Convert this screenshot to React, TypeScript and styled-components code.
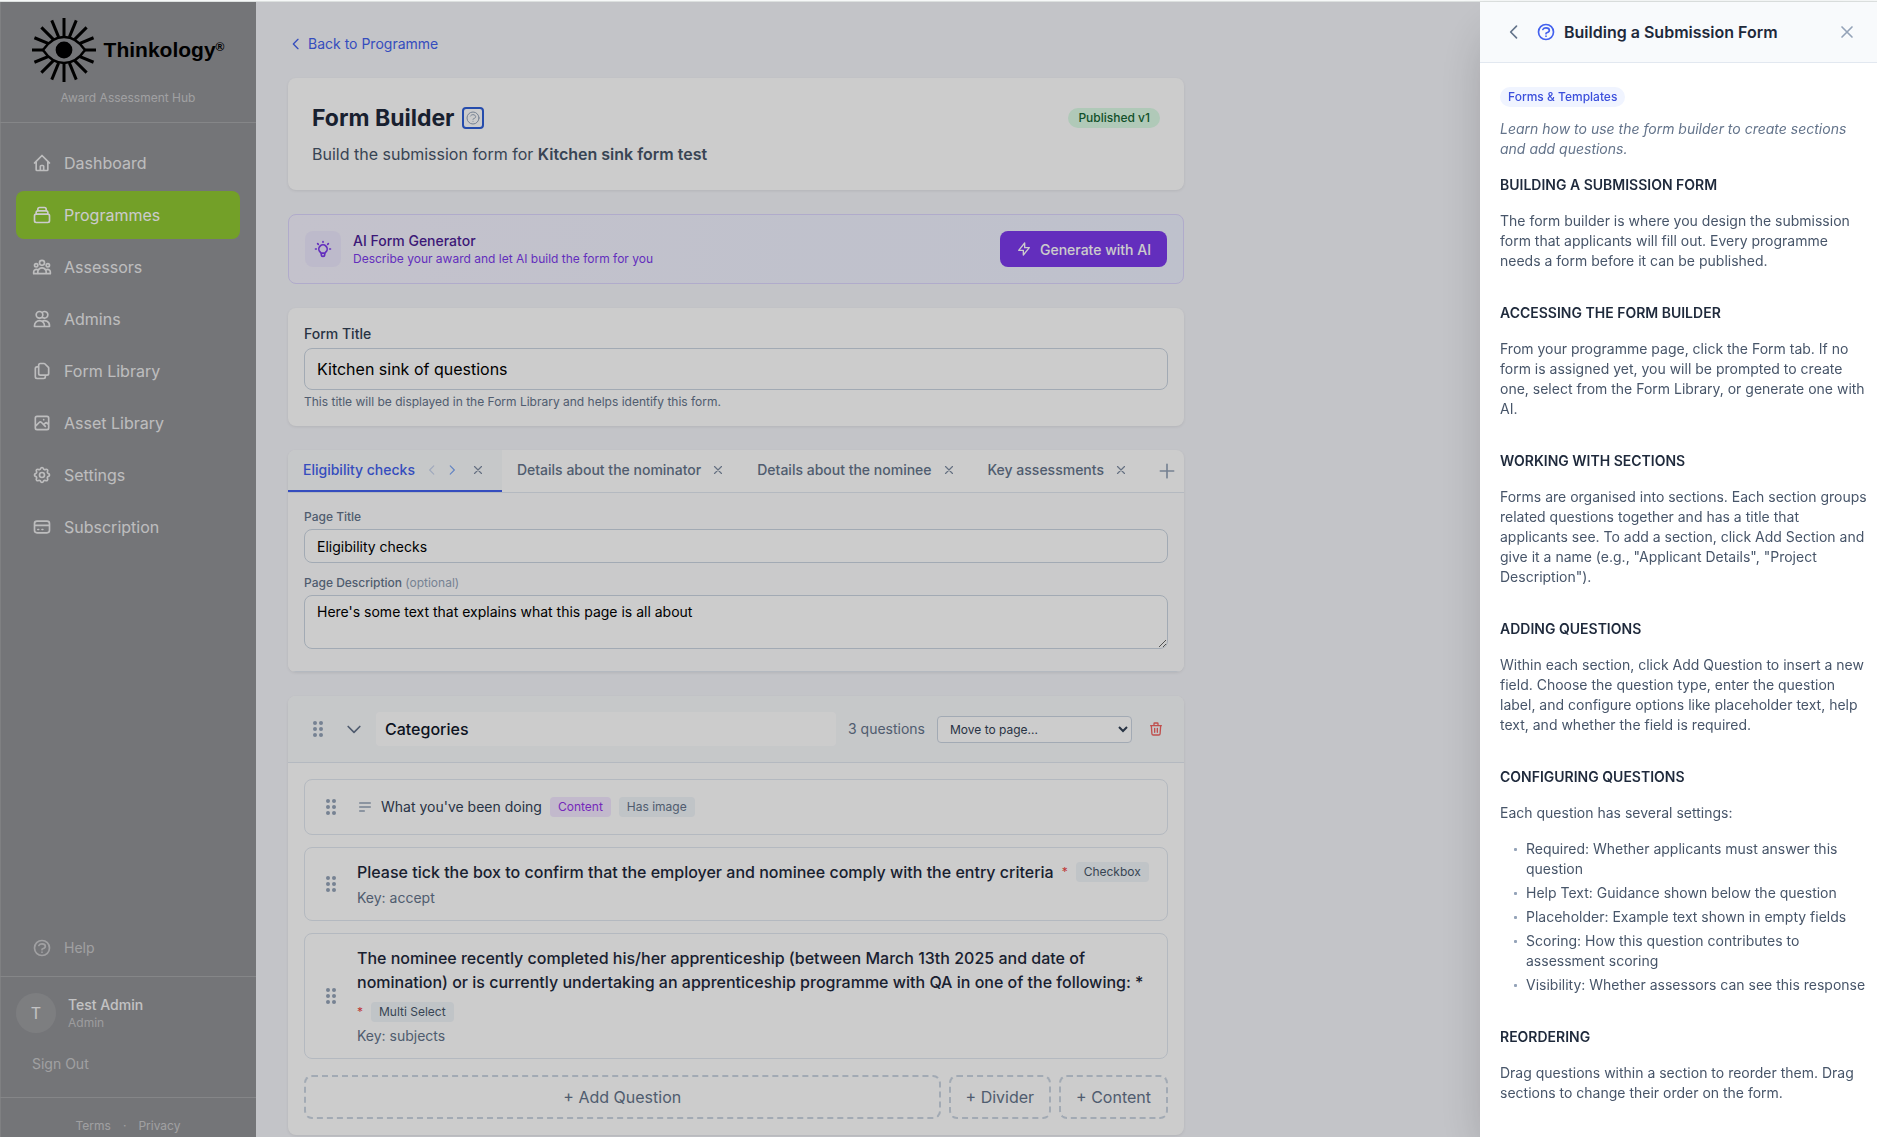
import React from "react";
import styled, { createGlobalStyle, css } from "styled-components";

const GlobalStyle = createGlobalStyle`
  *, *::before, *::after { box-sizing: border-box; }
  body {
    margin: 0;
    font-family: Inter, "Liberation Sans", sans-serif;
    font-size: 16px;
    line-height: 24px;
    color: #0f172a;
    -webkit-font-smoothing: antialiased;
  }
  h1, h2, h3, p, ul { margin: 0; padding: 0; }
  button, input, select, textarea { font-family: inherit; margin: 0; }
  button { background: none; border: 0; padding: 0; cursor: pointer; color: inherit; }
  a { text-decoration: none; color: inherit; }
`;

const paths = {
  home: "M3 12l2-2m0 0l7-7 7 7M5 10v10a1 1 0 001 1h3m10-11l2 2m-2-2v10a1 1 0 01-1 1h-3m-6 0a1 1 0 001-1v-4a1 1 0 011-1h2a1 1 0 011 1v4a1 1 0 001 1m-6 0h6",
  collection:
    "M19 11H5m14 0a2 2 0 012 2v6a2 2 0 01-2 2H5a2 2 0 01-2-2v-6a2 2 0 012-2m14 0V9a2 2 0 00-2-2M5 11V9a2 2 0 012-2m0 0V5a2 2 0 012-2h6a2 2 0 012 2v2M7 7h10",
  group:
    "M17 20h5v-2a3 3 0 00-5.356-1.857M17 20H7m10 0v-2c0-.656-.126-1.283-.356-1.857M7 20H2v-2a3 3 0 015.356-1.857M7 20v-2c0-.656.126-1.283.356-1.857m0 0a5.002 5.002 0 019.288 0M15 7a3 3 0 11-6 0 3 3 0 016 0zm6 3a2 2 0 11-4 0 2 2 0 014 0zM7 10a2 2 0 11-4 0 2 2 0 014 0z",
  users:
    "M12 4.354a4 4 0 110 5.292M15 21H3v-1a6 6 0 0112 0v1zm0 0h6v-1a6 6 0 00-9-5.197M13 7a4 4 0 11-8 0 4 4 0 018 0z",
  documents:
    "M8 7v8a2 2 0 002 2h6M8 7V5a2 2 0 012-2h4.586a1 1 0 01.707.293l4.414 4.414a1 1 0 01.293.707V15a2 2 0 01-2 2h-2M8 7H6a2 2 0 00-2 2v10a2 2 0 002 2h8a2 2 0 002-2v-2",
  photo:
    "M4 16l4.586-4.586a2 2 0 012.828 0L16 16m-2-2l1.586-1.586a2 2 0 012.828 0L20 14m-6-6h.01M6 20h12a2 2 0 002-2V6a2 2 0 00-2-2H6a2 2 0 00-2 2v12a2 2 0 002 2z",
  cog: "M10.325 4.317c.426-1.756 2.924-1.756 3.35 0a1.724 1.724 0 002.573 1.066c1.543-.94 3.31.826 2.37 2.37a1.724 1.724 0 001.065 2.572c1.756.426 1.756 2.924 0 3.35a1.724 1.724 0 00-1.066 2.573c.94 1.543-.826 3.31-2.37 2.37a1.724 1.724 0 00-2.572 1.065c-.426 1.756-2.924 1.756-3.35 0a1.724 1.724 0 00-2.573-1.066c-1.543.94-3.31-.826-2.37-2.37a1.724 1.724 0 00-1.065-2.572c-1.756-.426-1.756-2.924 0-3.35a1.724 1.724 0 001.066-2.573c-.94-1.543.826-3.31 2.37-2.37.996.608 2.296.07 2.572-1.065z M15 12a3 3 0 11-6 0 3 3 0 016 0z",
  card: "M3 10h18M7 15h1m4 0h1m-7 4h12a3 3 0 003-3V8a3 3 0 00-3-3H6a3 3 0 00-3 3v8a3 3 0 003 3z",
  help: "M8.228 9c.549-1.165 2.03-2 3.772-2 2.21 0 4 1.343 4 3 0 1.4-1.278 2.575-3.006 2.907-.542.104-.994.54-.994 1.093m0 3h.01M21 12a9 9 0 11-18 0 9 9 0 0118 0z",
  bulb: "M9.663 17h4.673M12 3v1m6.364 1.636l-.707.707M21 12h-1M4 12H3m3.343-5.657l-.707-.707m2.828 9.9a5 5 0 117.072 0l-.548.547A3.374 3.374 0 0014 18.469V19a2 2 0 11-4 0v-.531c0-.895-.356-1.754-.988-2.386l-.548-.547z",
  bolt: "M13 10V3L4 14h7v7l9-11h-7z",
  trash:
    "M19 7l-.867 12.142A2 2 0 0116.138 21H7.862a2 2 0 01-1.995-1.858L5 7m5 4v6m4-6v6m1-10V4a1 1 0 00-1-1h-4a1 1 0 00-1 1v3M4 7h16",
  left: "M15 19l-7-7 7-7",
  right: "M9 5l7 7-7 7",
  down: "M19 9l-7 7-7-7",
  close: "M6 18L18 6M6 6l12 12",
  plus: "M12 4v16m8-8H4",
  lines: "M4 6h16M4 12h16M4 18h7",
};

type IconName = keyof typeof paths;

const Svg = styled.svg`
  display: block;
  flex: none;
`;

function Icon({ name, size = 20, stroke = 2 }: { name: IconName; size?: number; stroke?: number }) {
  return (
    <Svg
      width={size}
      height={size}
      viewBox="0 0 24 24"
      fill="none"
      stroke="currentColor"
      strokeWidth={stroke}
      strokeLinecap="round"
      strokeLinejoin="round"
      aria-hidden="true"
    >
      <path d={paths[name]} />
    </Svg>
  );
}

function Dots() {
  return (
    <Svg width="20" height="20" viewBox="0 0 20 20" fill="currentColor" aria-hidden="true">
      {[4, 10, 16].map((y) => (
        <React.Fragment key={y}>
          <circle cx="7" cy={y} r="2" />
          <circle cx="13" cy={y} r="2" />
        </React.Fragment>
      ))}
    </Svg>
  );
}

/* ---------- Shell ---------- */

const Shell = styled.div`
  height: 100vh;
  display: flex;
  flex-direction: column;
  overflow: hidden;
`;

const TopStrip = styled.div`
  flex: none;
  height: 2px;
  background: #f6f8f8;
  border-bottom: 1px solid #dce0df;
`;

const Body = styled.div`
  flex: 1;
  min-height: 0;
  display: flex;
`;

const Backdrop = styled.div`
  position: fixed;
  inset: 2px 0 0;
  background: rgba(0, 0, 0, 0.2);
`;

/* ---------- Sidebar ---------- */

const Sidebar = styled.aside`
  flex: none;
  width: 256px;
  display: flex;
  flex-direction: column;
  background: #929397;
  box-shadow: inset 1px 0 #9fa0a3;
  color: #f4f4f5;
`;

const Brand = styled.div`
  height: 121px;
  padding-top: 16px;
  display: flex;
  flex-direction: column;
  align-items: center;
  gap: 8px;
  border-bottom: 1px solid #a7a8ab;
`;

const Logo = styled.div`
  display: flex;
  align-items: center;
  gap: 8px;
  color: #000;
`;

const Wordmark = styled.span`
  font-family: "Liberation Sans", Arial, sans-serif;
  font-weight: 700;
  font-size: 21px;
  line-height: 24px;
  sup {
    font-size: 12px;
    line-height: 12px;
    vertical-align: 6px;
  }
`;

const Tagline = styled.span`
  font-size: 12px;
  line-height: 16px;
  color: #c9c9cb;
`;

const Nav = styled.nav`
  flex: 1;
  padding: 16px;
  display: flex;
  flex-direction: column;
  gap: 4px;
`;

const NavLink = styled.a<{ $active?: boolean }>`
  height: 48px;
  padding: 0 16px;
  display: flex;
  align-items: center;
  gap: 12px;
  border-radius: 8px;
  color: #ededee;
  ${(p) =>
    p.$active &&
    css`
      background: #90c832;
      color: #fff;
    `}
`;

const HelpLink = styled.a`
  height: 40px;
  margin: 0 16px 8px;
  padding: 0 16px;
  display: flex;
  align-items: center;
  gap: 12px;
  font-size: 14px;
  color: #c9c9cb;
`;

const Account = styled.div`
  padding: 16px;
  border-top: 1px solid #a7a8ab;
`;

const Person = styled.div`
  display: flex;
  align-items: center;
  gap: 12px;
  margin-bottom: 12px;
`;

const Avatar = styled.div`
  width: 40px;
  height: 40px;
  border-radius: 50%;
  display: grid;
  place-items: center;
  background: #9d9ea1;
`;

const PersonName = styled.div`
  font-size: 14px;
  font-weight: 500;
  line-height: 20px;
`;

const PersonRole = styled.div`
  font-size: 12px;
  line-height: 16px;
  color: #c4c4c6;
`;

const SignOut = styled.button`
  width: 100%;
  height: 36px;
  padding: 0 16px;
  text-align: left;
  font-size: 14px;
  color: #c9c9cb;
`;

const Legal = styled.div`
  padding: 20px 0 3px;
  display: flex;
  justify-content: center;
  gap: 12px;
  border-top: 1px solid #a7a8ab;
  font-size: 12px;
  line-height: 16px;
  color: #c9c9cb;
`;

/* ---------- Main column ---------- */

const Main = styled.main`
  flex: 1;
  min-width: 0;
  padding: 32px;
  overflow: hidden;
  background: #f4f5fa;
`;

const Column = styled.div`
  max-width: 896px;
  display: flex;
  flex-direction: column;
  gap: 24px;
`;

const BackLink = styled.a`
  align-self: flex-start;
  display: flex;
  align-items: center;
  gap: 4px;
  font-size: 14px;
  line-height: 20px;
  color: #4361ee;
`;

const Card = styled.section`
  background: #fff;
  border-radius: 8px;
  box-shadow: 0 1px 3px rgba(0, 0, 0, 0.08);
  overflow: hidden;
`;

const HeaderCard = styled(Card)`
  padding: 24px;
  display: flex;
  justify-content: space-between;
  align-items: flex-start;
`;

const TitleRow = styled.div`
  display: flex;
  align-items: center;
  gap: 10px;
  margin-bottom: 8px;
`;

const Title = styled.h1`
  font-size: 23px;
  line-height: 32px;
  font-weight: 700;
  color: #1e293b;
`;

const HintButton = styled.button`
  padding: 1px;
  border-radius: 2px;
  outline: 2px solid #2f5fd8;
  color: #94a3b8;
`;

const Subtitle = styled.p`
  color: #475569;
  strong {
    font-weight: 600;
  }
`;

const Published = styled.span`
  margin-top: 6px;
  padding: 2px 10px;
  border-radius: 10px;
  font-size: 12px;
  line-height: 16px;
  font-weight: 500;
  background: #dcfce7;
  color: #166534;
`;

const AiCard = styled.section`
  padding: 16px;
  display: flex;
  align-items: center;
  gap: 12px;
  border: 1px solid #ddd6fe;
  border-radius: 8px;
  background: linear-gradient(90deg, #f5f3ff, #eef2ff);
`;

const AiBadge = styled.div`
  padding: 8px;
  border-radius: 8px;
  background: #ede9fe;
  color: #7c3aed;
`;

const AiText = styled.div`
  flex: 1;
`;

const AiTitle = styled.h3`
  font-size: 14px;
  line-height: 20px;
  font-weight: 500;
  color: #4c1d95;
`;

const AiNote = styled.p`
  font-size: 12px;
  line-height: 16px;
  color: #7c3aed;
`;

const AiButton = styled.button`
  height: 36px;
  padding: 0 16px;
  display: flex;
  align-items: center;
  gap: 8px;
  border-radius: 8px;
  background: #7c3aed;
  color: #fff;
  font-size: 14px;
  font-weight: 500;
`;

const PaddedCard = styled(Card)`
  padding: 16px;
`;

const Label = styled.label<{ $small?: boolean }>`
  display: block;
  margin-bottom: 4px;
  font-weight: 500;
  font-size: ${(p) => (p.$small ? 12 : 14)}px;
  line-height: ${(p) => (p.$small ? 16 : 20)}px;
  color: ${(p) => (p.$small ? "#64748b" : "#334155")};
  span {
    font-weight: 400;
    color: #94a3b8;
  }
`;

const field = css`
  display: block;
  width: 100%;
  border: 1px solid #cbd5e1;
  border-radius: 8px;
  background: #fff;
  color: #000;
`;

const TextInput = styled.input<{ $small?: boolean }>`
  ${field}
  height: ${(p) => (p.$small ? 34 : 42)}px;
  padding: 0 12px;
  font-size: ${(p) => (p.$small ? 14 : 16)}px;
`;

const TextArea = styled.textarea`
  ${field}
  height: 54px;
  padding: 6px 12px;
  font-size: 14px;
  line-height: 20px;
`;

const HelpText = styled.p`
  margin-top: 4px;
  font-size: 12px;
  line-height: 16px;
  color: #64748b;
`;

const TabBar = styled.div`
  display: flex;
  border-bottom: 1px solid #e2e8f0;
`;

const Tab = styled.div<{ $active?: boolean }>`
  flex: none;
  height: 42px;
  padding: 0 15px;
  display: flex;
  align-items: center;
  gap: 8px;
  border-bottom: 2px solid transparent;
  color: #64748b;
  ${(p) =>
    p.$active &&
    css`
      border-color: #4361ee;
      background: #f8fafc;
      color: #4361ee;
    `}
`;

const TabName = styled.button`
  font-size: 14px;
  line-height: 20px;
  font-weight: 500;
`;

const Movers = styled.span`
  display: flex;
  gap: 2px;
`;

const TinyButton = styled.button<{ $tone?: "blue" | "faint" }>`
  padding: 2px;
  color: ${(p) => (p.$tone === "blue" ? "#7aa5f5" : p.$tone === "faint" ? "#c7d3ec" : "#7f8da3")};
`;

const AddTab = styled.button`
  flex: none;
  padding: 0 12px;
  color: #94a3b8;
`;

const TabPanel = styled.div`
  padding: 16px 16px 22px;
  display: flex;
  flex-direction: column;
  gap: 12px;
  background: #fdfdfe;
  border-bottom: 1px solid #e2e8f0;
`;

const SectionHead = styled.div`
  padding: 16px;
  display: flex;
  align-items: center;
  gap: 12px;
  background: #f8fafc;
  border-bottom: 1px solid #e2e8f0;
`;

const Handle = styled.button`
  flex: none;
  padding: 4px;
  color: #94a3b8;
`;

const Toggle = styled.button`
  flex: none;
  color: #64748b;
`;

const SectionName = styled.input`
  flex: 1;
  min-width: 0;
  height: 34px;
  padding: 0 9px;
  border: 0;
  border-radius: 4px;
  background: #fff;
  font-size: 16px;
  font-weight: 500;
  color: #0f172a;
`;

const Count = styled.span`
  font-size: 14px;
  line-height: 20px;
  color: #64748b;
`;

const MoveSelect = styled.select`
  width: 195px;
  height: 27px;
  padding: 0 8px;
  border: 1px solid #cbd5e1;
  border-radius: 4px;
  background: #fff;
  font-size: 12px;
  color: #334155;
`;

const Delete = styled.button`
  flex: none;
  padding: 4px;
  color: #f0625f;
`;

const SectionBody = styled.div`
  padding: 16px;
  display: flex;
  flex-direction: column;
  gap: 12px;
`;

const Question = styled.article`
  min-height: 56px;
  padding: 12px;
  display: flex;
  align-items: center;
  gap: 12px;
  border: 1px solid #e2e8f0;
  border-radius: 8px;
`;

const QuestionLine = styled.div`
  display: flex;
  flex-wrap: wrap;
  align-items: center;
  gap: 8px;
`;

const QuestionTitle = styled.h3`
  font-size: 16px;
  line-height: 24px;
  font-weight: 500;
  color: #1e293b;
`;

const ContentTitle = styled.h3`
  font-size: 14px;
  line-height: 20px;
  font-weight: 400;
  color: #334155;
`;

const Star = styled.span`
  font-size: 12px;
  line-height: 16px;
  color: #ef4444;
`;

const Key = styled.p`
  margin-top: 4px;
  font-size: 14px;
  line-height: 20px;
  color: #64748b;
`;

const chipTones = {
  slate: css`
    background: #f1f5f9;
    color: #475569;
  `,
  muted: css`
    background: #f1f5f9;
    color: #64748b;
  `,
  purple: css`
    background: #f3e8ff;
    color: #9333ea;
  `,
};

const Chip = styled.span<{ $tone: keyof typeof chipTones }>`
  padding: 2px 8px;
  border-radius: 4px;
  font-size: 12px;
  line-height: 16px;
  ${(p) => chipTones[p.$tone]}
`;

const Muted = styled.span`
  color: #94a3b8;
`;

const AddRow = styled.div`
  margin-top: 4px;
  display: flex;
  gap: 8px;
`;

const AddButton = styled.button<{ $grow?: boolean }>`
  flex: ${(p) => (p.$grow ? "1" : "none")};
  height: 44px;
  padding: 0 15px;
  border: 2px dashed #cbd5e1;
  border-radius: 8px;
  font-size: 16px;
  color: #64748b;
`;

/* ---------- Help drawer ---------- */

const Drawer = styled.aside`
  position: fixed;
  top: 2px;
  right: 0;
  bottom: 0;
  width: 397px;
  overflow: hidden;
  background: #fff;
  box-shadow: 0 25px 50px -12px rgba(0, 0, 0, 0.25);
`;

const DrawerHead = styled.header`
  height: 61px;
  padding: 0 20px;
  display: flex;
  align-items: center;
  background: #f8fafc;
  border-bottom: 1px solid #e2e8f0;
  color: #4361ee;
`;

const DrawerTitle = styled.h2`
  flex: 1;
  margin-left: 8px;
  font-size: 16px;
  line-height: 24px;
  font-weight: 600;
  color: #1e293b;
`;

const DrawerButton = styled.button<{ $back?: boolean }>`
  padding: ${(p) => (p.$back ? "4px" : "0")};
  margin-right: ${(p) => (p.$back ? "8px" : "0")};
  color: ${(p) => (p.$back ? "#64748b" : "#94a3b8")};
`;

const DrawerBody = styled.div`
  padding: 24px 8px 24px 20px;
  font-size: 14px;
  line-height: 20px;
  color: #475569;
`;

const Topic = styled.span`
  display: inline-block;
  padding: 2px 8px;
  border-radius: 10px;
  font-size: 12px;
  line-height: 16px;
  font-weight: 500;
  vertical-align: top;
  background: #f0f4ff;
  color: #3b4fdc;
`;

const Intro = styled.p`
  margin-top: 12px;
  margin-bottom: 16px;
  font-style: italic;
  color: #64748b;
`;

const Article = styled.section`
  display: flex;
  flex-direction: column;
  gap: 16px;
  margin-bottom: 32px;
`;

const ArticleTitle = styled.h3`
  font-size: 14px;
  line-height: 20px;
  font-weight: 600;
  text-transform: uppercase;
  color: #1e293b;
`;

const List = styled.ul`
  display: flex;
  flex-direction: column;
  gap: 4px;
  list-style: none;
`;

const ListItem = styled.li`
  display: flex;
  padding-left: 14px;
  &::before {
    content: "";
    flex: none;
    width: 3px;
    height: 3px;
    margin: 9px 9px 0 0;
    border-radius: 1px;
    background: #94a3b8;
  }
`;

const nav: { name: string; icon: IconName }[] = [
  { name: "Dashboard", icon: "home" },
  { name: "Programmes", icon: "collection" },
  { name: "Assessors", icon: "group" },
  { name: "Admins", icon: "users" },
  { name: "Form Library", icon: "documents" },
  { name: "Asset Library", icon: "photo" },
  { name: "Settings", icon: "cog" },
  { name: "Subscription", icon: "card" },
];

const articles: { title: string; text: string; items?: string[] }[] = [
  {
    title: "Building a Submission Form",
    text: "The form builder is where you design the submission form that applicants will fill out. Every programme needs a form before it can be published.",
  },
  {
    title: "Accessing the Form Builder",
    text: "From your programme page, click the Form tab. If no form is assigned yet, you will be prompted to create one, select from the Form Library, or generate one with AI.",
  },
  {
    title: "Working with Sections",
    text: 'Forms are organised into sections. Each section groups related questions together and has a title that applicants see. To add a section, click Add Section and give it a name (e.g., "Applicant Details", "Project Description").',
  },
  {
    title: "Adding Questions",
    text: "Within each section, click Add Question to insert a new field. Choose the question type, enter the question label, and configure options like placeholder text, help text, and whether the field is required.",
  },
  {
    title: "Configuring Questions",
    text: "Each question has several settings:",
    items: [
      "Required: Whether applicants must answer this question",
      "Help Text: Guidance shown below the question",
      "Placeholder: Example text shown in empty fields",
      "Scoring: How this question contributes to assessment scoring",
      "Visibility: Whether assessors can see this response",
    ],
  },
  {
    title: "Reordering",
    text: "Drag questions within a section to reorder them. Drag sections to change their order on the form.",
  },
];

function EyeLogo() {
  const rays = Array.from({ length: 16 }, (_, i) => (i * Math.PI) / 8);
  return (
    <Svg width="64" height="64" viewBox="-32 -32 64 64" aria-hidden="true">
      {rays.map((a) => (
        <line
          key={a}
          x1={Math.cos(a) * 14}
          y1={Math.sin(a) * 14}
          x2={Math.cos(a) * 32}
          y2={Math.sin(a) * 32}
          stroke="#000"
          strokeWidth="3"
        />
      ))}
      <path
        d="M-21 0C-15 -9 -8 -13 0 -13S15 -9 21 0C15 9 8 13 0 13S-15 9 -21 0Z"
        fill="#929397"
        stroke="#000"
        strokeWidth="2.4"
      />
      <circle r="8.4" />
    </Svg>
  );
}

export default function App() {
  return (
    <Shell>
      <GlobalStyle />
      <TopStrip />
      <Body>
        <Sidebar>
          <Brand>
            <Logo>
              <EyeLogo />
              <Wordmark>
                Thinkology<sup>®</sup>
              </Wordmark>
            </Logo>
            <Tagline>Award Assessment Hub</Tagline>
          </Brand>
          <Nav>
            {nav.map((n) => (
              <NavLink key={n.name} href="#" $active={n.name === "Programmes"}>
                <Icon name={n.icon} />
                {n.name}
              </NavLink>
            ))}
          </Nav>
          <HelpLink href="#">
            <Icon name="help" />
            Help
          </HelpLink>
          <Account>
            <Person>
              <Avatar>T</Avatar>
              <div>
                <PersonName>Test Admin</PersonName>
                <PersonRole>Admin</PersonRole>
              </div>
            </Person>
            <SignOut>Sign Out</SignOut>
          </Account>
          <Legal>
            <a href="#">Terms</a>
            <span>·</span>
            <a href="#">Privacy</a>
          </Legal>
        </Sidebar>

        <Main>
          <Column>
            <BackLink href="#">
              <Icon name="left" size={16} />
              Back to Programme
            </BackLink>

            <HeaderCard>
              <div>
                <TitleRow>
                  <Title>Form Builder</Title>
                  <HintButton aria-label="Help with the form builder">
                    <Icon name="help" size={16} stroke={1.5} />
                  </HintButton>
                </TitleRow>
                <Subtitle>
                  Build the submission form for <strong>Kitchen sink form test</strong>
                </Subtitle>
              </div>
              <Published>Published v1</Published>
            </HeaderCard>

            <AiCard>
              <AiBadge>
                <Icon name="bulb" />
              </AiBadge>
              <AiText>
                <AiTitle>AI Form Generator</AiTitle>
                <AiNote>Describe your award and let AI build the form for you</AiNote>
              </AiText>
              <AiButton>
                <Icon name="bolt" size={16} />
                Generate with AI
              </AiButton>
            </AiCard>

            <PaddedCard>
              <Label htmlFor="form-title">Form Title</Label>
              <TextInput id="form-title" defaultValue="Kitchen sink of questions" />
              <HelpText>This title will be displayed in the Form Library and helps identify this form.</HelpText>
            </PaddedCard>

            <Card>
              <TabBar>
                <Tab $active>
                  <TabName>Eligibility checks</TabName>
                  <Movers>
                    <TinyButton $tone="faint" aria-label="Move page left">
                      <Icon name="left" size={14} />
                    </TinyButton>
                    <TinyButton $tone="blue" aria-label="Move page right">
                      <Icon name="right" size={14} />
                    </TinyButton>
                  </Movers>
                  <TinyButton aria-label="Remove page">
                    <Icon name="close" size={14} />
                  </TinyButton>
                </Tab>
                {["Details about the nominator", "Details about the nominee", "Key assessments"].map((t) => (
                  <Tab key={t}>
                    <TabName>{t}</TabName>
                    <TinyButton aria-label={`Remove ${t}`}>
                      <Icon name="close" size={14} />
                    </TinyButton>
                  </Tab>
                ))}
                <AddTab aria-label="Add page">
                  <Icon name="plus" />
                </AddTab>
              </TabBar>
              <TabPanel>
                <div>
                  <Label $small htmlFor="page-title">
                    Page Title
                  </Label>
                  <TextInput $small id="page-title" defaultValue="Eligibility checks" />
                </div>
                <div>
                  <Label $small htmlFor="page-description">
                    Page Description <span>(optional)</span>
                  </Label>
                  <TextArea
                    id="page-description"
                    defaultValue="Here's some text that explains what this page is all about"
                  />
                </div>
              </TabPanel>
            </Card>

            <Card>
              <SectionHead>
                <Handle aria-label="Drag section">
                  <Dots />
                </Handle>
                <Toggle aria-label="Collapse section">
                  <Icon name="down" />
                </Toggle>
                <SectionName aria-label="Section name" defaultValue="Categories" />
                <Count>3 questions</Count>
                <MoveSelect aria-label="Move to page">
                  <option>Move to page...</option>
                </MoveSelect>
                <Delete aria-label="Delete section">
                  <Icon name="trash" size={16} />
                </Delete>
              </SectionHead>
              <SectionBody>
                <Question>
                  <Handle aria-label="Drag question">
                    <Dots />
                  </Handle>
                  <QuestionLine>
                    <Muted>
                      <Icon name="lines" size={16} />
                    </Muted>
                    <ContentTitle>What you've been doing</ContentTitle>
                    <Chip $tone="purple">Content</Chip>
                    <Chip $tone="muted">Has image</Chip>
                  </QuestionLine>
                </Question>
                <Question>
                  <Handle aria-label="Drag question">
                    <Dots />
                  </Handle>
                  <div>
                    <QuestionLine>
                      <QuestionTitle>
                        Please tick the box to confirm that the employer and nominee comply with the entry criteria
                      </QuestionTitle>
                      <Star>*</Star>
                      <Chip $tone="slate">Checkbox</Chip>
                    </QuestionLine>
                    <Key>Key: accept</Key>
                  </div>
                </Question>
                <Question>
                  <Handle aria-label="Drag question">
                    <Dots />
                  </Handle>
                  <div>
                    <QuestionLine>
                      <QuestionTitle>
                        The nominee recently completed his/her apprenticeship (between March 13th 2025 and date of
                        nomination) or is currently undertaking an apprenticeship programme with QA in one of the
                        following: *
                      </QuestionTitle>
                      <Star>*</Star>
                      <Chip $tone="slate">Multi Select</Chip>
                    </QuestionLine>
                    <Key>Key: subjects</Key>
                  </div>
                </Question>
                <AddRow>
                  <AddButton $grow>+ Add Question</AddButton>
                  <AddButton>+ Divider</AddButton>
                  <AddButton>+ Content</AddButton>
                </AddRow>
              </SectionBody>
            </Card>
          </Column>
        </Main>
      </Body>

      <Backdrop />

      <Drawer>
        <DrawerHead>
          <DrawerButton $back aria-label="Back">
            <Icon name="left" />
          </DrawerButton>
          <Icon name="help" />
          <DrawerTitle>Building a Submission Form</DrawerTitle>
          <DrawerButton aria-label="Close">
            <Icon name="close" />
          </DrawerButton>
        </DrawerHead>
        <DrawerBody>
          <Topic>Forms &amp; Templates</Topic>
          <Intro>Learn how to use the form builder to create sections and add questions.</Intro>
          {articles.map((a) => (
            <Article key={a.title}>
              <ArticleTitle>{a.title}</ArticleTitle>
              <p>{a.text}</p>
              {a.items && (
                <List>
                  {a.items.map((i) => (
                    <ListItem key={i}>{i}</ListItem>
                  ))}
                </List>
              )}
            </Article>
          ))}
        </DrawerBody>
      </Drawer>
    </Shell>
  );
}
